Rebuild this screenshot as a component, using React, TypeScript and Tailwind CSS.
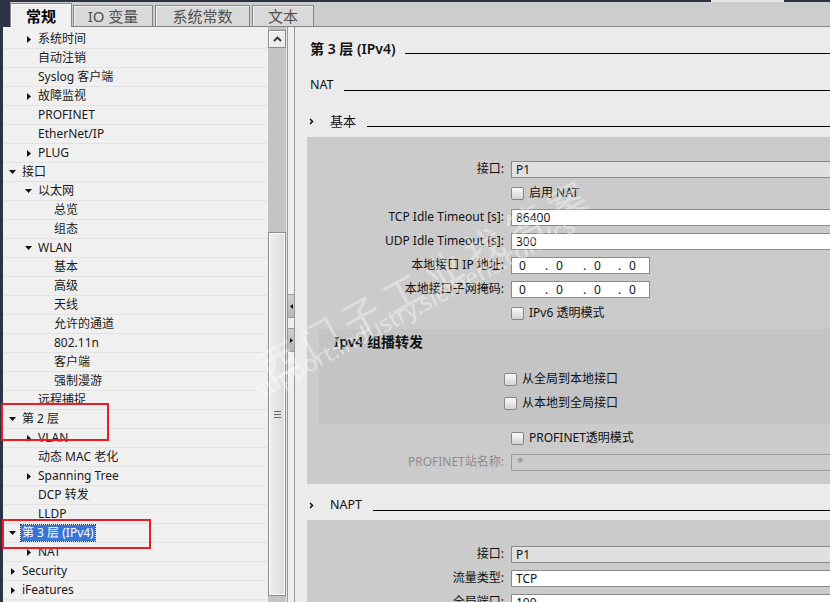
import React from "react";

type Item = { t: string; l: 0 | 1 | 2; a?: "r" | "d"; sel?: boolean };

const tree: Item[] = [
  { t: "系统时间", l: 1, a: "r" },
  { t: "自动注销", l: 1 },
  { t: "Syslog 客户端", l: 1 },
  { t: "故障监视", l: 1, a: "r" },
  { t: "PROFINET", l: 1 },
  { t: "EtherNet/IP", l: 1 },
  { t: "PLUG", l: 1, a: "r" },
  { t: "接口", l: 0, a: "d" },
  { t: "以太网", l: 1, a: "d" },
  { t: "总览", l: 2 },
  { t: "组态", l: 2 },
  { t: "WLAN", l: 1, a: "d" },
  { t: "基本", l: 2 },
  { t: "高级", l: 2 },
  { t: "天线", l: 2 },
  { t: "允许的通道", l: 2 },
  { t: "802.11n", l: 2 },
  { t: "客户端", l: 2 },
  { t: "强制漫游", l: 2 },
  { t: "远程捕捉", l: 1 },
  { t: "第 2 层", l: 0, a: "d" },
  { t: "VLAN", l: 1, a: "r" },
  { t: "动态 MAC 老化", l: 1 },
  { t: "Spanning Tree", l: 1, a: "r" },
  { t: "DCP 转发", l: 1 },
  { t: "LLDP", l: 1 },
  { t: "第 3 层 (IPv4)", l: 0, a: "d", sel: true },
  { t: "NAT", l: 1, a: "r" },
  { t: "Security", l: 0, a: "r" },
  { t: "iFeatures", l: 0, a: "r" },
];

function ArrowRight() {
  return (
    <svg width="4" height="7" viewBox="0 0 4 7" className="ml-[5px]">
      <path d="M0 0 L4 3.5 L0 7 Z" fill="#111" />
    </svg>
  );
}
function ArrowDown() {
  return (
    <svg width="7" height="4" viewBox="0 0 7 4" className="ml-[3px]">
      <path d="M0 0 H7 L3.5 4 Z" fill="#111" />
    </svg>
  );
}

function TreeRow({ it }: { it: Item }) {
  const pl = it.l === 0 ? "pl-[3px]" : it.l === 1 ? "pl-[19px]" : "pl-[35px]";
  return (
    <div className={`h-[19px] shrink-0 border-b border-[#e3e3e3] flex items-center ${pl}`}>
      <div className="w-[16px] h-full flex items-center">
        {it.a === "r" && <ArrowRight />}
        {it.a === "d" && <ArrowDown />}
      </div>
      {it.sel ? (
        <span className="bg-[#3a74d4] text-white leading-[16px] px-[1px] -ml-[1px] outline outline-1 outline-dotted outline-[#223a70] whitespace-nowrap">
          {it.t}
        </span>
      ) : (
        <span className="leading-[16px] text-[#1a1a1a] whitespace-nowrap">{it.t}</span>
      )}
    </div>
  );
}

function Checkbox() {
  return (
    <div className="w-[13px] h-[13px] rounded-[2px] border border-[#858585] bg-linear-to-b from-[#fbfbfb] to-[#d2d2d2] shrink-0" />
  );
}

function Row({ label, children, gray }: { label?: string; children: React.ReactNode; gray?: boolean }) {
  return (
    <div className="h-[24px] flex items-center">
      <div className={`w-[197px] text-right whitespace-nowrap leading-[16px] ${gray ? "text-[#8c8c8c]" : "text-[#111]"}`}>
        {label}
      </div>
      <div className="ml-[7px] flex items-center">{children}</div>
    </div>
  );
}

function Input({ v, disabled }: { v: string; disabled?: boolean }) {
  return (
    <div
      className={`w-[340px] h-[17px] border border-[#8a8a8a] flex items-center pl-[4px] leading-[15px] ${
        disabled ? "bg-[#e0e0e0]" : "bg-white"
      }`}
    >
      {v}
    </div>
  );
}

function IpBox() {
  return (
    <div className="w-[139px] h-[17px] bg-white border border-[#8a8a8a] flex items-center leading-[15px]">
      <span className="w-[33px] pl-[7px]">0</span>
      <span className="w-[38px] flex">
        <span className="w-[11px]">.</span>0
      </span>
      <span className="w-[35px] flex">
        <span className="w-[11px]">.</span>0
      </span>
      <span className="flex">
        <span className="w-[11px]">.</span>0
      </span>
    </div>
  );
}

function CheckRow({ label }: { label: string }) {
  return (
    <Row>
      <div className="flex items-center">
        <Checkbox />
        <span className="ml-[5px] leading-[16px] whitespace-nowrap">{label}</span>
      </div>
    </Row>
  );
}

function Chevron() {
  return (
    <svg width="5" height="7" viewBox="0 0 5 7">
      <path d="M1 1 L3.5 3.5 L1 6" stroke="#111" strokeWidth="1.6" fill="none" />
    </svg>
  );
}

export default function App() {
  const dark = "bg-[#2c3347]";
  return (
    <div className="relative w-[830px] h-[602px] overflow-hidden flex flex-col font-['Noto_Sans','Noto_Sans_CJK_SC',sans-serif] text-[12px] text-[#111]">
      {/* top strip */}
      <div className="h-[2px] flex shrink-0">
        <div className={`flex-1 ${dark}`} />
        <div className="w-[73px] bg-[#e6e6e6]" />
        <div className={`w-[46px] ${dark}`} />
      </div>
      {/* tabs */}
      <div className="h-[25px] flex shrink-0">
        <div className={`w-[10px] ${dark}`} />
        <div className="flex-1 bg-[#cdcdcd] border-b border-[#858585] flex items-end">
          <div className="w-[62px] h-[24px] -mb-px bg-[#f0f0f0] border border-b-0 border-[#858585] shadow-[inset_1px_1px_0_#fff] flex items-center justify-center text-[15px] font-bold leading-[20px] text-black">
            常规
          </div>
          <div className="ml-[1px] w-[80px] h-[21px] bg-[#d9d9d9] border border-b-0 border-[#858585] shadow-[inset_1px_1px_0_#f4f4f4] flex items-center justify-center text-[15px] leading-[20px] text-[#505050]">
            IO 变量
          </div>
          <div className="ml-[2px] w-[95px] h-[21px] bg-[#d9d9d9] border border-b-0 border-[#858585] shadow-[inset_1px_1px_0_#f4f4f4] flex items-center justify-center text-[15px] leading-[20px] text-[#505050]">
            系统常数
          </div>
          <div className="ml-[2px] w-[62px] h-[21px] bg-[#d9d9d9] border border-b-0 border-[#858585] shadow-[inset_1px_1px_0_#f4f4f4] flex items-center justify-center text-[15px] leading-[20px] text-[#505050]">
            文本
          </div>
        </div>
      </div>
      {/* body */}
      <div className="flex-1 min-h-0 flex">
        <div className={`w-[3px] ${dark}`} />
        {/* tree */}
        <div className="w-[265px] bg-[#f0f0f0] pt-[3px] flex flex-col overflow-hidden">
          {tree.map((it, i) => (
            <TreeRow key={i} it={it} />
          ))}
        </div>
        {/* scrollbar */}
        <div className="w-[19px] flex">
          <div className="w-[18px] bg-[#c4c4c4] flex flex-col">
            <div className="mt-[3px] h-[18px] border border-[#8a8a8a] bg-[#ececec] shadow-[inset_1px_1px_0_#fff] flex items-center justify-center">
              <svg width="9" height="6" viewBox="0 0 9 6">
                <path d="M1 5 L4.5 1.5 L8 5" stroke="#333" strokeWidth="1.8" fill="none" />
              </svg>
            </div>
            <div className="mt-[184px] h-[364px] border border-[#8a8a8a] shadow-[inset_1px_1px_0_#fff,inset_-1px_-1px_0_#fff] bg-linear-to-r from-[#eeeeee] to-[#dcdcdc] flex flex-col items-center justify-center gap-[2px]">
              <div className="w-[7px] h-px bg-[#666]" />
              <div className="w-[7px] h-px bg-[#666]" />
              <div className="w-[7px] h-px bg-[#666]" />
            </div>
          </div>
          <div className="w-px bg-[#e4e4e4]" />
        </div>
        {/* splitter */}
        <div className="w-[8px] border-x border-[#9a9a9a] bg-[#efefef] flex flex-col">
          <div className="mt-[267px] h-[24px] border-y border-[#9a9a9a] bg-linear-to-b from-[#cfcfcf] to-[#b6b6b6] flex items-center justify-center">
            <svg width="3" height="5" viewBox="0 0 3 5">
              <path d="M3 0 L0 2.5 L3 5 Z" fill="#111" />
            </svg>
          </div>
          <div className="mt-[10px] h-[24px] border-y border-[#9a9a9a] bg-linear-to-b from-[#cfcfcf] to-[#b6b6b6] flex items-center justify-center">
            <svg width="3" height="5" viewBox="0 0 3 5">
              <path d="M0 0 L3 2.5 L0 5 Z" fill="#111" />
            </svg>
          </div>
        </div>
        {/* right panel */}
        <div className="flex-1 bg-[#ebebeb] overflow-hidden pl-[12px] pt-[14px]">
          <div className="w-[560px] flex flex-col">
            <div className="flex items-end pl-[3px]">
              <span className="text-[14px] font-semibold leading-[16px] whitespace-nowrap">第 3 层 (IPv4)</span>
              <div className="flex-1 h-px bg-black ml-[10px] mb-[3px]" />
            </div>
            <div className="mt-[20px] flex items-end pl-[3px]">
              <span className="text-[12.5px] leading-[16px]">NAT</span>
              <div className="flex-1 h-px bg-black ml-[10px] mb-[2px]" />
            </div>
            <div className="mt-[20px] flex items-end">
              <div className="w-[23px] pl-[2px] h-[16px] flex items-center">
                <Chevron />
              </div>
              <span className="text-[13px] leading-[16px]">基本</span>
              <div className="flex-1 h-px bg-black ml-[11px] mb-[2px]" />
            </div>
            {/* box 1 */}
            <div className="mt-[8px] bg-[#cbcbcb] pt-[20px] pb-[10px] flex flex-col">
              <Row label="接口:">
                <Input v="P1" disabled />
              </Row>
              <CheckRow label="启用 NAT" />
              <Row label="TCP Idle Timeout [s]:">
                <Input v="86400" />
              </Row>
              <Row label="UDP Idle Timeout [s]:">
                <Input v="300" />
              </Row>
              <Row label="本地接口 IP 地址:">
                <IpBox />
              </Row>
              <Row label="本地接口子网掩码:">
                <IpBox />
              </Row>
              <CheckRow label="IPv6 透明模式" />
              <div className="mt-[4px] ml-[12px] bg-[#c4c4c4] pb-[9px] flex flex-col">
                <div className="h-[26px] flex items-center pl-[15px] text-[14px] font-semibold leading-[16px]">
                  Ipv4 组播转发
                </div>
                <div className="mt-[12px] h-[24px] flex items-center pl-[185px]">
                  <Checkbox />
                  <span className="ml-[5px] leading-[16px] whitespace-nowrap">从全局到本地接口</span>
                </div>
                <div className="h-[24px] flex items-center pl-[185px]">
                  <Checkbox />
                  <span className="ml-[5px] leading-[16px] whitespace-nowrap">从本地到全局接口</span>
                </div>
              </div>
              <div className="mt-[2px]">
                <CheckRow label="PROFINET透明模式" />
              </div>
              <Row label="PROFINET站名称:" gray>
                <div className="w-[340px] h-[17px] border border-[#9c9c9c] pl-[5px] leading-[15px] text-[#8c8c8c]">*</div>
              </Row>
            </div>
            <div className="mt-[13px] flex items-end">
              <div className="w-[23px] pl-[2px] h-[16px] flex items-center">
                <Chevron />
              </div>
              <span className="text-[12.5px] leading-[16px]">NAPT</span>
              <div className="flex-1 h-px bg-black ml-[11px] mb-[2px]" />
            </div>
            {/* box 2 */}
            <div className="mt-[7px] bg-[#cbcbcb] pt-[22px] pb-[10px] flex flex-col">
              <Row label="接口:">
                <Input v="P1" disabled />
              </Row>
              <Row label="流量类型:">
                <Input v="TCP" />
              </Row>
              <Row label="全局端口:">
                <Input v="100" />
              </Row>
            </div>
          </div>
        </div>
      </div>

      {/* watermark */}
      <div className="absolute left-[262px] top-[350px] origin-left -rotate-[29deg] whitespace-nowrap text-[38px] tracking-[9px] leading-[40px] text-white/40 pointer-events-none">
        西门子工业找答案
      </div>
      <div className="absolute left-[256px] top-[378px] origin-left -rotate-[28deg] whitespace-nowrap text-[23px] leading-[26px] text-white/45 pointer-events-none">
        support.industry.siemens.com/cs
      </div>

      {/* red annotation boxes */}
      <div className="absolute left-[1px] top-[403px] w-[108px] h-[38px] border-2 border-[#ec1c24] pointer-events-none" />
      <div className="absolute left-[2px] top-[519px] w-[149px] h-[30px] border-2 border-[#ec1c24] pointer-events-none" />
    </div>
  );
}
